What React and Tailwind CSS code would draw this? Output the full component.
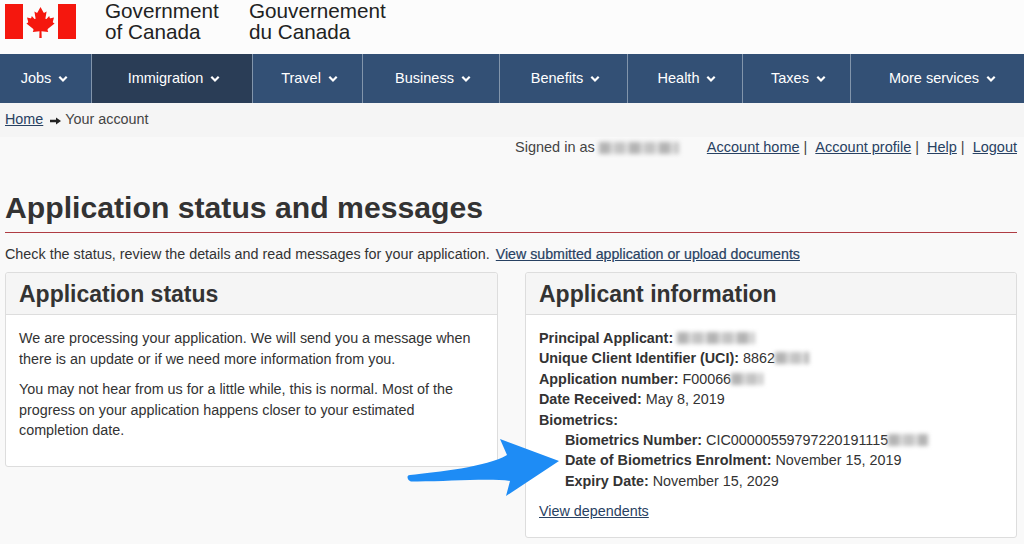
const navItems = [
  { label: 'Jobs', width: 'w-[92px] pr-[2px]' },
  { label: 'Immigration', width: 'w-[161px] pl-[4px]', active: true },
  { label: 'Travel', width: 'w-[110px] pl-[4px]' },
  { label: 'Business', width: 'w-[137px] pl-[4px]' },
  { label: 'Benefits', width: 'w-[128px] pl-[4px]' },
  { label: 'Health', width: 'w-[115px] pl-[4px]' },
  { label: 'Taxes', width: 'w-[108px] pl-[4px]' },
  { label: 'More services', width: 'flex-1 pl-[10px]', last: true },
];

const Flag = () => (
  <svg width="71" height="35" viewBox="0 0 71 35" className="block">
    <rect x="0" y="0" width="18" height="35" fill="#f5170e" />
    <rect x="53" y="0" width="18" height="35" fill="#f5170e" />
    <path
      d="M35.5 3 L38.4 8.2 C38.8 8.8 39.3 8.8 39.8 8.5 L41.6 7.5 L40.5 14 C40.3 15 41 15.4 41.7 14.7 L44.2 12 L44.8 13.9 C45 14.3 45.3 14.4 45.7 14.3 L49 13.6 L47.9 17.6 C47.7 18.2 47.8 18.6 48.3 18.8 L49.6 19.4 L43 24.8 C42.5 25.3 42.4 25.6 42.6 26.2 L43.2 28 L36.5 27.2 L36.7 34 L34.3 34 L34.5 27.2 L27.8 28 L28.4 26.2 C28.6 25.6 28.5 25.3 28 24.8 L21.4 19.4 L22.7 18.8 C23.2 18.6 23.3 18.2 23.1 17.6 L22 13.6 L25.3 14.3 C25.7 14.4 26 14.3 26.2 13.9 L26.8 12 L29.3 14.7 C30 15.4 30.7 15 30.5 14 L29.4 7.5 L31.2 8.5 C31.7 8.8 32.2 8.8 32.6 8.2 Z"
      fill="#f5170e"
    />
  </svg>
);

const Chevron = () => (
  <svg width="10" height="8" viewBox="0 0 10 8" className="ml-[7px] mt-[1px] shrink-0">
    <path d="M1.3 1.8 L5 5.5 L8.7 1.8" fill="none" stroke="#fff" strokeWidth="2.2" />
  </svg>
);

const CrumbArrow = () => (
  <svg width="11" height="8" viewBox="0 0 11 8" className="ml-[7px] mr-[4px] mt-[1px] shrink-0">
    <path d="M0 2.800 H6 V0.500 L11 4 L6 7.500 V5.200 H0 Z" fill="#222222" />
  </svg>
);

const Blurred = ({ className }) => (
  <span className={`inline-block h-[12px] bg-[repeating-linear-gradient(90deg,#b4b4b4_0_11px,#dadada_11px_16px,#c4c4c4_16px_26px,#e2e2e2_26px_30px)] blur-[2px] align-[-1px] ${className}`} />
);

const Arrow = () => (
  <svg width="160" height="64" viewBox="0 0 160 64" className="absolute left-[402px] top-[436px]">
    <path
      d="M5.500 41 C5.500 39.800 6.500 39.200 8 39 C35 36 85 31 105 19 L98 3 L157 25 L104 60 L108 45 C85 42 40 46 10 45.500 C7 45.500 5.500 43 5.500 41 Z"
      fill="#1e8cf5"
    />
  </svg>
);

const Panel = ({ title, className, children }) => (
  <section className={`rounded-[3px] border border-[#dddddd] bg-white ${className}`}>
    <h2 className="h-[42px] rounded-t-[3px] border-b border-[#dddddd] bg-[#f5f5f5] pl-[13px] pt-[6px] text-[23px] font-bold leading-[30px] text-[#333333]">
      {title}
    </h2>
    {children}
  </section>
);

const Label = ({ children }) => <strong className="font-bold">{children}</strong>;

const App = () => {
  return (
    <div
      className="relative h-[544px] w-[1024px] overflow-hidden bg-[#f9f9f9] text-[14.35px] text-[#333333]"
      style={{ fontFamily: '"Liberation Sans", Arial, sans-serif' }}
    >
      <header className="flex h-[54px] bg-[#fcfcfc] pl-[5px] pt-[4px]">
        <Flag />
        <div className="ml-[29px] -mt-[4px] w-[144px] text-[20.700px] leading-[21px] text-[#222222]">
          Government
          <br />
          of Canada
        </div>
        <div className="-mt-[4px] text-[20.700px] leading-[21px] text-[#222222]">
          Gouvernement
          <br />
          du Canada
        </div>
      </header>

      <nav className="flex h-[49px] bg-[#335075]">
        {navItems.map((item) => (
          <div
            key={item.label}
            className={`flex items-center justify-center text-[14.5px] text-white ${item.width} ${item.active ? 'bg-[#2a3d56]' : ''} ${item.last ? '' : 'border-r border-[#8295ab]'}`}
          >
            {item.label}
            <Chevron />
          </div>
        ))}
      </nav>

      <div className="flex h-[34px] items-center bg-[#f5f5f5] pl-[5px] text-[#444444]">
        <a className="text-[#284162] underline">Home</a>
        <CrumbArrow />
        <span>Your account</span>
      </div>

      <div className="flex h-[20px] items-center justify-end pr-[7px] pt-[1px] text-[14.5px] text-[#444444]">
        <span>Signed in as</span>
        <Blurred className="ml-[4px] w-[80px]" />
        <a className="ml-[28px] text-[#284162] underline">Account home</a>
        <span className="ml-[4px]">|</span>
        <a className="ml-[8px] text-[#284162] underline">Account profile</a>
        <span className="ml-[4px]">|</span>
        <a className="ml-[8px] text-[#284162] underline">Help</a>
        <span className="ml-[4px]">|</span>
        <a className="ml-[8px] text-[#284162] underline">Logout</a>
      </div>

      <main className="px-[5px] pr-[7px]">
        <h1 className="mt-[31px] h-[45px] border-b border-[#af3c43] text-[30.200px] font-bold leading-[40px] text-[#333333]">
          Application status and messages
        </h1>
        <p className="mt-[11px] leading-[20px] text-[#333333]">
          Check the status, review the details and read messages for your application.{' '}
          <a className="ml-[2px] text-[14.2px] text-[#284162] underline [-webkit-text-stroke:0.2px_#284162]">
            View submitted application or upload documents
          </a>
        </p>

        <div className="mt-[8px] flex items-start justify-between">
          <Panel title="Application status" className="h-[195px] w-[493px]">
            <div className="px-[13px] pt-[13px] leading-[20.500px]">
              <p>
                We are processing your application. We will send you a message when there is an update or if we need more information from you.
              </p>
              <p className="mt-[10px]">
                You may not hear from us for a little while, this is normal. Most of the progress on your application happens closer to your estimated completion date.
              </p>
            </div>
          </Panel>

          <Panel title="Applicant information" className="h-[266px] w-[492px]">
            <div className="px-[13px] pt-[13px] leading-[20.400px]">
              <div>
                <Label>Principal Applicant:</Label> <Blurred className="w-[78px]" />
              </div>
              <div>
                <Label>Unique Client Identifier (UCI):</Label> 8862<Blurred className="w-[34px]" />
              </div>
              <div>
                <Label>Application number:</Label> F00066<Blurred className="w-[32px]" />
              </div>
              <div>
                <Label>Date Received:</Label> May 8, 2019
              </div>
              <div>
                <Label>Biometrics:</Label>
              </div>
              <div className="pl-[26px]">
                <div>
                  <Label>Biometrics Number:</Label> CIC00000559797220191115<Blurred className="w-[40px]" />
                </div>
                <div>
                  <Label>Date of Biometrics Enrolment:</Label> November 15, 2019
                </div>
                <div>
                  <Label>Expiry Date:</Label> November 15, 2029
                </div>
              </div>
              <a className="mt-[10px] block text-[#284162] underline">View dependents</a>
            </div>
          </Panel>
        </div>
      </main>

      <Arrow />
    </div>
  );
};

export default App;
